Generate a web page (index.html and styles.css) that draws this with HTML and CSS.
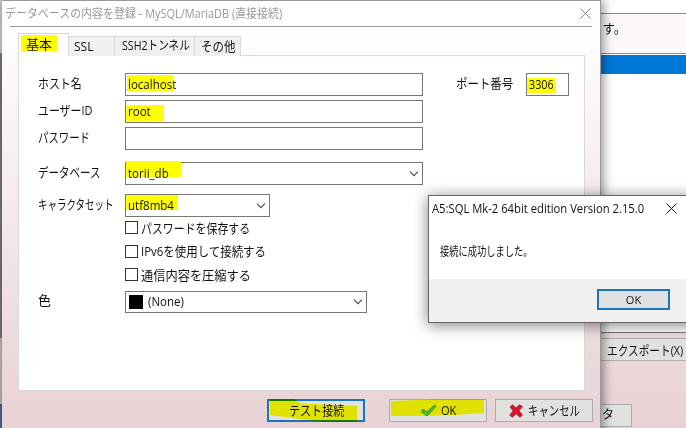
FILE: index.html
```html
<!DOCTYPE html>
<html lang="ja">
<head>
<meta charset="utf-8">
<title>データベースの内容を登録</title>
<link rel="stylesheet" href="styles.css">
</head>
<body>
<main class="desktop">
  <section class="back">
    <div class="back-title"></div>
    <div class="back-head"><span class="t back-note">ます。</span></div>
    <div class="back-list"><div class="back-row"></div></div>
    <div class="back-foot">
      <div class="btn export"><span class="t export-text">エクスポート(X)</span></div>
      <div class="btn data"><span class="t data-text">タ</span></div>
    </div>
  </section>

  <section class="dialog">
    <header class="titlebar">
      <span class="t title">データベースの内容を登録 - MySQL/MariaDB (直接接続)</span>
      <svg class="close" viewBox="0 0 11 11"><path d="M.5 .5l10 10M10.500 .5l-10 10"/></svg>
    </header>
    <nav class="tabs">
      <div class="tab active"><i class="mark mark-tab"></i><span class="t">基本</span></div>
      <div class="tab tab-ssl"><span class="t">SSL</span></div>
      <div class="tab tab-ssh"><span class="t ssh">SSH2トンネル</span></div>
      <div class="tab tab-other"><span class="t other">その他</span></div>
      <div class="tab-line"></div>
    </nav>
    <div class="panel">
      <div class="row host"><label><span class="t k-host">ホスト名</span></label><div class="field"><i class="mark mark-host"></i><span class="t v">localhost</span></div>
        <label class="port-label"><span class="t k-port">ポート番号</span></label><div class="field port"><i class="mark mark-port"></i><span class="t v">3306</span></div></div>
      <div class="row"><label><span class="t k-user">ユーザーID</span></label><div class="field"><i class="mark mark-user"></i><span class="t v">root</span></div></div>
      <div class="row"><label><span class="t k-pass">パスワード</span></label><div class="field"></div></div>
      <div class="row db"><label><span class="t k-db">データベース</span></label><div class="field"><i class="mark mark-db"></i><span class="t v">torii_db</span><svg class="arrow" viewBox="0 0 10 6"><path d="M1 .7l4 4 4-4"/></svg></div></div>
      <div class="row cs"><label><span class="t k-cs">キャラクタセット</span></label><div class="field charset"><i class="mark mark-cs"></i><span class="t v">utf8mb4</span><svg class="arrow" viewBox="0 0 10 6"><path d="M1 .7l4 4 4-4"/></svg></div></div>
      <div class="checks">
        <div class="check"><i class="box"></i><span class="t c1">パスワードを保存する</span></div>
        <div class="check"><i class="box"></i><span class="t c2">IPv6を使用して接続する</span></div>
        <div class="check"><i class="box"></i><span class="t c3">通信内容を圧縮する</span></div>
      </div>
      <div class="row color"><label><span class="t">色</span></label><div class="field colorbox"><i class="swatch"></i><span class="t v none">(None)</span><svg class="arrow" viewBox="0 0 10 6"><path d="M1 .7l4 4 4-4"/></svg></div></div>
    </div>
    <footer class="actions">
      <div class="btn test"><svg class="ink" viewBox="0 0 98 23"><path d="M3 0H27L34 4.500 90 7V23H60L36 20.500 3 16z"/></svg><span class="t test-text">テスト接続</span></div>
      <div class="btn ok"><svg class="ink" viewBox="0 0 98 23"><path d="M2 2L30 1 50 0 95 0V14L65 16 38 17 2 17z"/></svg>
        <svg class="tick" viewBox="0 0 17 13"><path d="M1 7.500L3.500 5 6.500 8 14.500 1 16 2.500 7 12z"/></svg><span class="t">OK</span></div>
      <div class="btn cancel"><svg class="cross" viewBox="0 0 14 14"><path d="M1 3L3.500 .8 7 4 10.500 .8 13.500 2.500 10 6.800 13.500 11 11 13.300 7 9.800 3.500 13.300 .7 11.200 4 6.800z"/></svg><span class="t cancel-text">キャンセル</span></div>
    </footer>
  </section>

  <section class="message">
    <header class="msg-title"><span class="t mt">A5:SQL Mk-2 64bit edition Version 2.15.0</span><svg class="close dark" viewBox="0 0 11 11"><path d="M.5 .5l10 10M10.500 .5l-10 10"/></svg></header>
    <div class="msg-body"><span class="t mb">接続に成功しました。</span></div>
    <footer class="msg-foot"><div class="btn msg-ok"><span class="t">OK</span></div></footer>
  </section>
</main>
</body>
</html>
```
FILE: styles.css
```css
* { box-sizing: border-box; }
body { margin: 0; overflow: hidden; font: 12px/16px "Open Sans", "Noto Sans CJK JP", sans-serif; color: #111; }
.desktop { position: relative; width: 686px; height: 428px; overflow: hidden; background: linear-gradient(#ccc 0 53px, #777 53px 338px, #bbb 338px 404px, #4a6590 404px); }
.t { display: inline-block; position: relative; white-space: nowrap; transform-origin: 0 50%; flex: none; line-height: 16px; }
svg { display: block; flex: none; }

.back { margin-left: 600px; height: 428px; display: flex; flex-direction: column; background: #fff; }
.back-title { height: 14px; border-bottom: 1px solid #8d8b8c; }
.back-head { height: 40px; background: #fdf9fa; border-bottom: 1px solid #7b91a0; padding: 6px 0 0; }
.back-note { margin-left: -10px; font-size: 13px; transform: scaleX(.96); }
.back-list { height: 279px; border-bottom: 1px solid #777; padding-top: 1px; }
.back-row { height: 19px; background: #0078d7; }
.back-foot { flex: 1; background: linear-gradient(#eedadd, #e8d1d5); padding-top: 5px; }
.btn { position: relative; display: flex; align-items: center; border: 1px solid #adadad; background: #e1e1e1; height: 23px; }
.export { width: 90px; margin-left: -1px; padding-left: 7px; }
.export-text { font-size: 13px; transform: scaleX(.82); }
.data { width: 32px; margin-top: 43px; height: 23px; }
.data-text { left: 1px; top: -1px; }

.dialog { position: absolute; left: 2px; top: 0; width: 599px; height: 440px; border-top: 1px solid #999; border-right: 1px solid #999; background: linear-gradient(#fff 0, #fffcfd 40px, #e8d2d5 420px); box-shadow: 2px 0 10px rgba(0,0,0,.45); }
.titlebar { height: 26px; margin: 0 8px; border-bottom: 1px solid #999; background: #fff; display: flex; align-items: center; justify-content: space-between; }
.title { margin-left: -5px; width: 290px; color: #999; transform: scaleX(.913); }
.close { width: 11px; height: 11px; margin-right: 1px; fill: none; stroke: #888; stroke-width: 1; }
.tabs { display: flex; align-items: flex-end; height: 29px; padding-left: 16px; }
.tab { position: relative; height: 20px; display: flex; align-items: center; padding-left: 5px; background: #f0f0f0; border: 1px solid #d9d9d9; border-left: 0; border-bottom: 0; font-size: 13px; }
.tab .t { top: -1px; }
.tab.tab-ssl .t { top: 0; }
.active { width: 51px; height: 23px; padding-left: 7px; background: #fff; border-left: 1px solid #d9d9d9; }
.tab-ssl { width: 46px; font-size: 12px; }
.tab-ssh { width: 80px; padding-left: 7px; }
.tab-other { width: 46px; padding-left: 6px; }
.tab-line { width: 344px; height: 1px; background: #d9d9d9; }
.ssh { transform: scaleX(.85); font-size: 12.500px; }
.other { transform: scaleX(.88); }
.mark { position: absolute; background: #ff0; }
.mark-tab { left: 2px; top: 1px; width: 36px; height: 16px; }

.panel { width: 567px; height: 335px; margin-left: 16px; border: 1px solid #d9d9d9; border-top: 0; background: #fff; padding: 17px 0 0 19px; }
.row { display: flex; height: 23px; margin-bottom: 4px; align-items: center; }
.row label { width: 87px; font-size: 13px; flex: none; display: flex; padding-bottom: 3px; }
.row .port-label { width: 70px; margin-left: 33px; }
.field { position: relative; width: 298px; height: 23px; border: 1px solid #777; background: #fff; display: flex; align-items: center; padding-left: 2px; }
.field.port { width: 43px; }
.v { font-size: 12px; transform: scaleX(.96); }
.port .v { transform: scaleX(.9); }
.db { margin-top: 12px; margin-bottom: 9px; }
.charset.field { width: 145px; }
.arrow { width: 10px; height: 6px; margin-left: auto; margin-right: 3px; fill: none; stroke: #444; stroke-width: 1.100; }
.mark-host { left: 1px; top: 1px; width: 46px; height: 16px; }
.mark-port { left: 0; top: 4px; width: 29px; height: 15px; }
.mark-user { left: 0; top: 4px; width: 38px; height: 16px; }
.mark-db { left: 0; top: -2px; width: 55px; height: 16px; }
.mark-cs { left: 0; top: 0; width: 52px; height: 15px; }
.checks { margin: -5px 0 0 87px; height: 74px; }
.check { display: flex; align-items: center; height: 23.500px; font-size: 13px; gap: 3px; }
.box { width: 13px; height: 13px; border: 1px solid #333; background: #fff; }
.k-host { transform: scaleX(.84); }
.k-user { transform: scaleX(.84); }
.k-pass { transform: scaleX(.8); }
.k-db { transform: scaleX(.81); }
.k-cs { transform: scaleX(.73); }
.k-port { transform: scaleX(.88); }
.c1 { transform: scaleX(.84); }
.c2 { transform: scaleX(.88); }
.c3 { transform: scaleX(.94); }
.colorbox.field { width: 242px; height: 22px; }
.swatch { width: 14px; height: 14px; background: #000; margin: 0 5px 0 1px; }

.actions { display: flex; margin: 8px 0 0 265px; }
.test { width: 98px; border: 2px solid #1874bd; padding-left: 20px; margin-right: 24px; }
.ok { width: 98px; padding-left: 30px; gap: 5px; margin-right: 8px; }
.cancel { width: 98px; padding-left: 13px; gap: 5px; }
.ink { position: absolute; left: -1px; top: -1px; width: 98px; height: 23px; fill: #ff0; mix-blend-mode: multiply; }
.ok .t { transform: scaleX(.92); left: -1px; }
.test .ink { left: -2px; top: -2px; }
.test-text { font-size: 13px; top: -1px; transform: scaleX(.85); }
.cancel-text { font-size: 13px; top: -1px; transform: scaleX(.8); }
.tick { position: relative; width: 17px; height: 13px; fill: #4bbd2a; stroke: #278b20; stroke-width: .8; }
.cross { width: 14px; height: 14px; fill: #d7172b; stroke: #a40e20; stroke-width: .7; }

.message { position: absolute; left: 428px; top: 195px; width: 270px; height: 128px; border: 1px solid #666; background: #fff; box-shadow: 0 2px 14px rgba(0,0,0,.5); display: flex; flex-direction: column; }
.msg-title { height: 25px; padding-left: 3px; display: flex; align-items: center; }
.mt { width: 234px; transform: scaleX(.937); }
.dark { stroke: #111; }
.msg-body { flex: 1; padding: 22px 0 0 11px; }
.mb { top: 1px; transform: scaleX(.77); }
.msg-foot { height: 43px; background: #f0f0f0; padding: 10px 0 0 168px; }
.msg-ok { width: 73px; height: 21px; border: 2px solid #1874bd; justify-content: center; }
.msg-ok .t { font-size: 11px; }
```
